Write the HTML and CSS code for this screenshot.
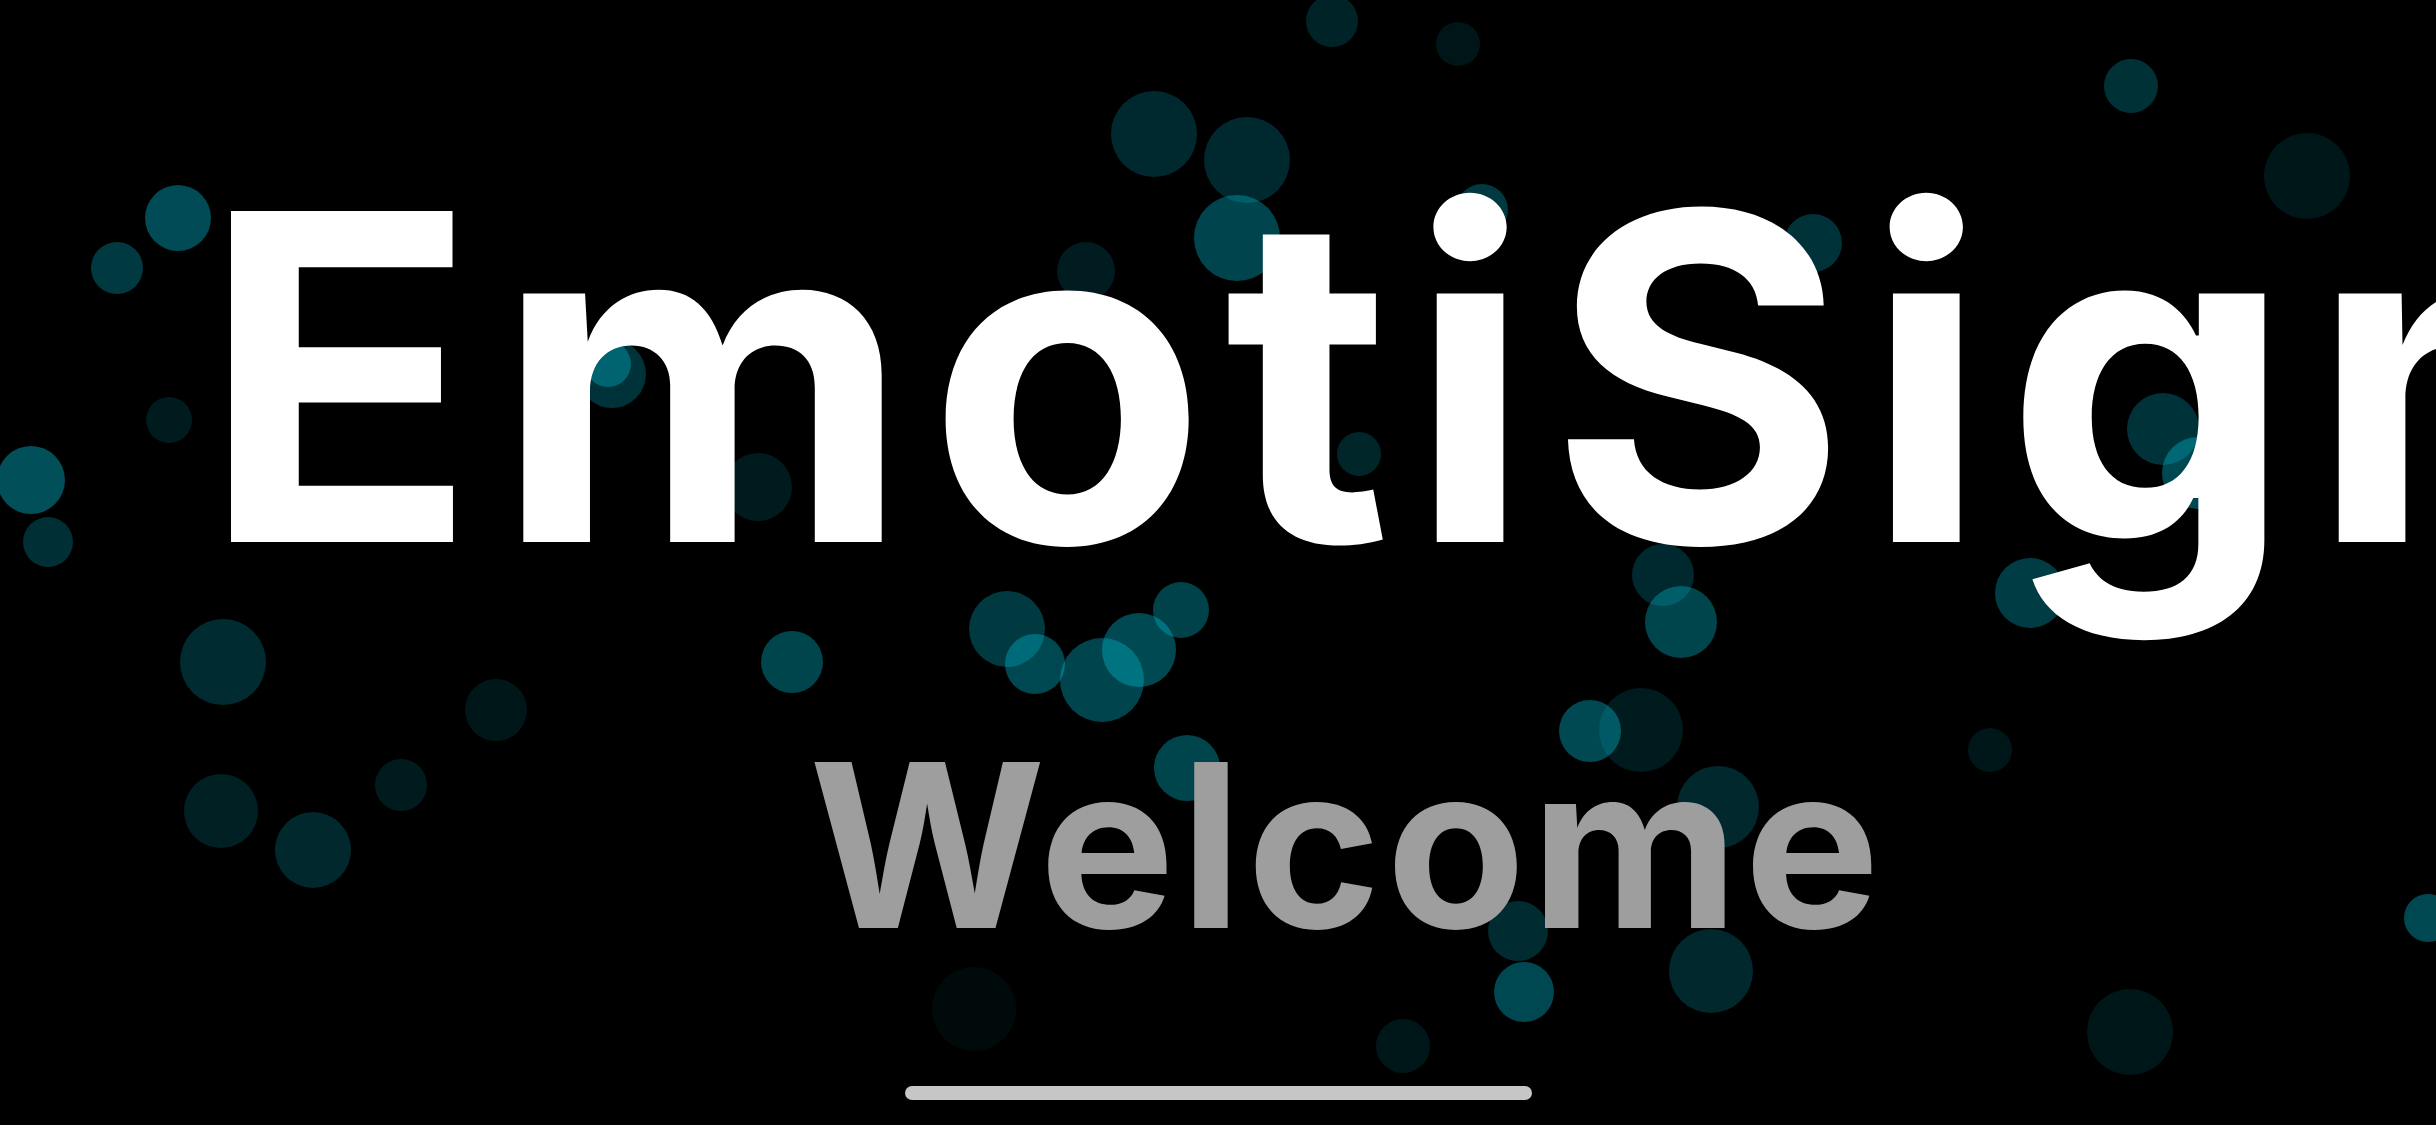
FILE: index.html
```html
<!DOCTYPE html>
<html lang="en">
<head>
<meta charset="utf-8">
<title>EmotiSign</title>
<link rel="stylesheet" href="styles.css">
</head>
<body>
<div class="screen">
  <svg class="bubbles" width="2436" height="1125" viewBox="0 0 2436 1125" aria-hidden="true">
    <g fill="#00bcd4">
      <circle cx="1332" cy="21" r="26" fill-opacity="0.19"/>
      <circle cx="1458" cy="44" r="22" fill-opacity="0.11"/>
      <circle cx="1154" cy="134" r="43" fill-opacity="0.22"/>
      <circle cx="1247" cy="160" r="43" fill-opacity="0.22"/>
      <circle cx="1237" cy="238" r="43" fill-opacity="0.37"/>
      <circle cx="1086" cy="271" r="29" fill-opacity="0.15"/>
      <circle cx="1813" cy="243" r="29" fill-opacity="0.27"/>
      <circle cx="2131" cy="86" r="27" fill-opacity="0.26"/>
      <circle cx="2307" cy="176" r="43" fill-opacity="0.12"/>
      <circle cx="178" cy="218" r="33" fill-opacity="0.40"/>
      <circle cx="117" cy="268" r="26" fill-opacity="0.30"/>
      <circle cx="612" cy="374" r="34" fill-opacity="0.27"/>
      <circle cx="608" cy="364" r="23" fill-opacity="0.36"/>
      <circle cx="169" cy="420" r="23" fill-opacity="0.14"/>
      <circle cx="31" cy="480" r="34" fill-opacity="0.42"/>
      <circle cx="48" cy="542" r="25" fill-opacity="0.25"/>
      <circle cx="758" cy="487" r="34" fill-opacity="0.14"/>
      <circle cx="223" cy="662" r="43" fill-opacity="0.23"/>
      <circle cx="496" cy="710" r="31" fill-opacity="0.12"/>
      <circle cx="792" cy="662" r="31" fill-opacity="0.36"/>
      <circle cx="221" cy="811" r="37" fill-opacity="0.17"/>
      <circle cx="313" cy="850" r="38" fill-opacity="0.21"/>
      <circle cx="401" cy="785" r="26" fill-opacity="0.14"/>
      <circle cx="1359" cy="454" r="22" fill-opacity="0.20"/>
      <circle cx="1007" cy="629" r="38" fill-opacity="0.30"/>
      <circle cx="1035" cy="664" r="30" fill-opacity="0.38"/>
      <circle cx="1102" cy="680" r="42" fill-opacity="0.37"/>
      <circle cx="1139" cy="650" r="37" fill-opacity="0.39"/>
      <circle cx="1181" cy="610" r="28" fill-opacity="0.35"/>
      <circle cx="1187" cy="768" r="33" fill-opacity="0.36"/>
      <circle cx="1663" cy="575" r="31" fill-opacity="0.22"/>
      <circle cx="1681" cy="622" r="36" fill-opacity="0.36"/>
      <circle cx="1641" cy="730" r="42" fill-opacity="0.14"/>
      <circle cx="1590" cy="731" r="31" fill-opacity="0.39"/>
      <circle cx="1718" cy="807" r="41" fill-opacity="0.21"/>
      <circle cx="1518" cy="931" r="30" fill-opacity="0.23"/>
      <circle cx="1524" cy="992" r="30" fill-opacity="0.38"/>
      <circle cx="1711" cy="971" r="42" fill-opacity="0.21"/>
      <circle cx="1403" cy="1046" r="27" fill-opacity="0.12"/>
      <circle cx="1990" cy="750" r="22" fill-opacity="0.12"/>
      <circle cx="2130" cy="1032" r="43" fill-opacity="0.12"/>
      <circle cx="2428" cy="918" r="24" fill-opacity="0.38"/>
      <circle cx="2030" cy="593" r="35" fill-opacity="0.32"/>
      <circle cx="2163" cy="429" r="36" fill-opacity="0.27"/>
      <circle cx="2198" cy="473" r="36" fill-opacity="0.38"/>
      <circle cx="1482" cy="210" r="26" fill-opacity="0.30"/>
      <circle cx="974" cy="1009" r="42" fill-opacity="0.05"/>
    </g>
  </svg>
  <main class="content">
    <h1 class="title">EmotiSign</h1>
    <p class="subtitle">Welcome</p>
  </main>
  <div class="home-indicator"></div>
</div>
</body>
</html>
```
FILE: styles.css
```css
* {
  box-sizing: border-box;
}

html,
body {
  margin: 0;
  padding: 0;
  background: #000;
}

.screen {
  position: relative;
  width: 2436px;
  height: 1125px;
  overflow: hidden;
  background: #000;
  display: flex;
  flex-direction: column;
  font-family: "Inter", "Noto Sans", "Liberation Sans", sans-serif;
}

.bubbles {
  position: absolute;
  left: 0;
  top: 0;
}

.content {
  position: relative;
  display: flex;
  flex-direction: column;
  flex: 1;
  padding-top: 149px;
}

.title {
  margin: 0 0 0 201px;
  font-size: 455px;
  line-height: 455px;
  font-weight: 700;
  color: #fff;
  white-space: nowrap;
  letter-spacing: 17.5px;
}

.subtitle {
  margin: 127px 0 0 809px;
  font-size: 228px;
  line-height: 228px;
  font-weight: 700;
  color: #9e9e9e;
  white-space: nowrap;
  letter-spacing: 5px;
}

.home-indicator {
  position: relative;
  align-self: center;
  width: 627px;
  height: 14px;
  border-radius: 7px;
  background: #c6c6c6;
  margin-bottom: 25px;
}
```
